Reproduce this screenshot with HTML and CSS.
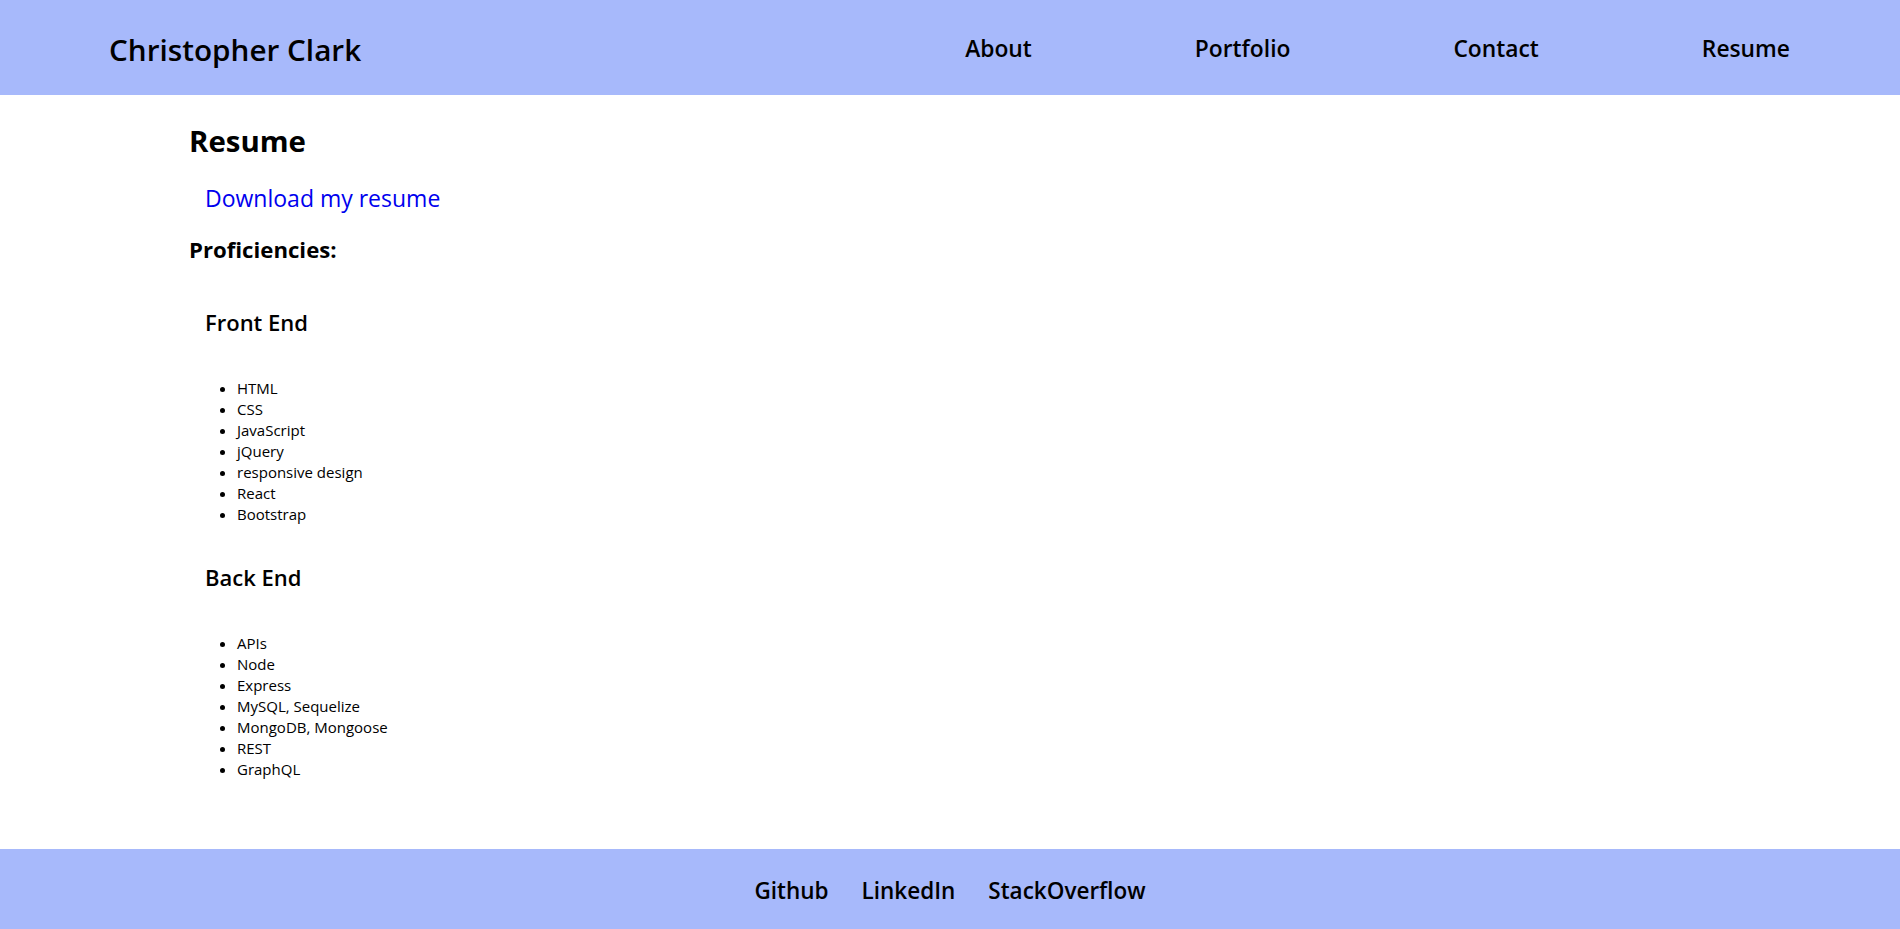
FILE: index.html
```html
<!DOCTYPE html>
<html lang="en">
<head>
<meta charset="utf-8">
<title>Christopher Clark - Resume</title>
<link rel="stylesheet" href="styles.css">
</head>
<body>
<header class="site-header">
  <div class="brand">Christopher Clark</div>
  <nav class="nav">
    <a class="nav-link" href="#">About</a>
    <a class="nav-link" href="#">Portfolio</a>
    <a class="nav-link" href="#">Contact</a>
    <a class="nav-link" href="#">Resume</a>
  </nav>
</header>
<main class="content">
  <h1 class="page-title">Resume</h1>
  <a class="download" href="#">Download my resume</a>
  <h3 class="section-title">Proficiencies:</h3>
  <h4 class="group-title first">Front End</h4>
  <ul class="skills">
    <li>HTML</li>
    <li>CSS</li>
    <li>JavaScript</li>
    <li>jQuery</li>
    <li>responsive design</li>
    <li>React</li>
    <li>Bootstrap</li>
  </ul>
  <h4 class="group-title">Back End</h4>
  <ul class="skills">
    <li>APIs</li>
    <li>Node</li>
    <li>Express</li>
    <li>MySQL, Sequelize</li>
    <li>MongoDB, Mongoose</li>
    <li>REST</li>
    <li>GraphQL</li>
  </ul>
</main>
<footer class="site-footer">
  <a class="foot-link" href="#">Github</a>
  <a class="foot-link" href="#">LinkedIn</a>
  <a class="foot-link" href="#">StackOverflow</a>
</footer>
</body>
</html>
```
FILE: styles.css
```css
html, body {
  margin: 0;
  padding: 0;
}
body {
  font-family: "Open Sans", "Noto Sans", sans-serif;
  color: #000;
  background: #fff;
}
.site-header {
  box-sizing: border-box;
  height: 95px;
  background: #a7b9fb;
  display: flex;
  align-items: center;
  justify-content: space-between;
  padding: 0 110px 0 109px;
}
.brand {
  font-size: 29.7px;
  font-weight: 600;
  line-height: 40px;
  margin-top: 4px;
}
.nav {
  display: flex;
  gap: 163px;
  margin-top: 3px;
}
.nav-link {
  font-size: 22.8px;
  font-weight: 600;
  line-height: 30px;
  color: #000;
  text-decoration: none;
}
.content {
  padding: 28px 0 0 189px;
  display: flex;
  flex-direction: column;
  align-items: flex-start;
}
.page-title {
  margin: 0;
  font-size: 29.4px;
  font-weight: 700;
  line-height: 36px;
}
.download {
  margin: 24px 0 0 16px;
  font-size: 23px;
  line-height: 30px;
  color: #0000ee;
  text-decoration: none;
}
.section-title {
  margin: 23px 0 0 0;
  font-size: 22.2px;
  font-weight: 700;
  line-height: 28px;
}
.group-title {
  margin: 37.5px 0 0 16px;
  font-size: 22px;
  font-weight: 600;
  line-height: 28px;
}
.group-title.first {
  margin-top: 44px;
}
.skills {
  margin: 42.5px 0 0 0;
  padding: 0 0 0 48px;
  font-size: 15px;
  line-height: 21px;
  list-style: disc;
}
.group-title.first + .skills {
  margin-top: 42px;
}
.site-footer {
  box-sizing: border-box;
  margin-top: 69px;
  height: 81px;
  background: #a7b9fb;
  border-bottom: 1px solid #c4b4b4;
  display: flex;
  justify-content: center;
  align-items: center;
  gap: 33px;
  padding-top: 4px;
}
.foot-link {
  font-size: 22.5px;
  font-weight: 600;
  line-height: 30px;
  color: #000;
  text-decoration: none;
}
```
